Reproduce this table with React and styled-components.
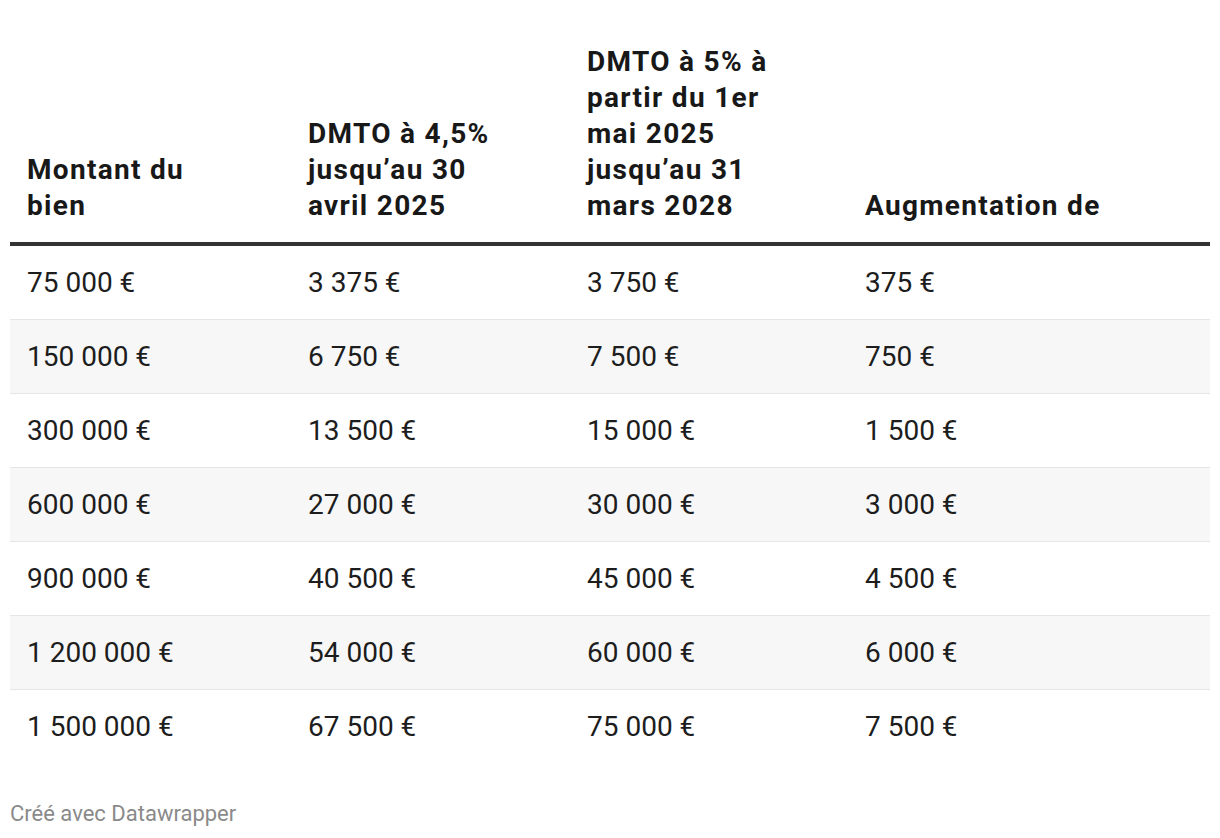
import React from 'react';
import styled, { createGlobalStyle } from 'styled-components';

const GlobalStyle = createGlobalStyle`
  html, body {
    margin: 0;
    padding: 0;
    background: #fff;
  }
  body {
    font-family: Roboto, "Liberation Sans", sans-serif;
    color: #1d1d1d;
  }
`;

const Page = styled.div`
  padding: 26px 10px 0 10px;
`;

const Table = styled.div`
  display: grid;
  grid-template-columns: 281px 279px 278px 1fr;
  width: 1200px;
`;

const HeadCell = styled.div`
  display: flex;
  align-items: flex-end;
  padding: 18px 17px 18px 17px;
  border-bottom: 4px solid #333;
  font-size: 28px;
  font-weight: 700;
  line-height: 36px;
  letter-spacing: 1.3px;
  color: #181818;
`;

const HeadLabel = styled.span`
  display: block;
  max-width: ${p => (p.$wide ? 'none' : '205px')};
`;

const Cell = styled.div`
  padding: 18px 17px;
  font-size: 28px;
  line-height: 37px;
  background: ${p => (p.$alt ? '#f7f7f7' : '#fff')};
  border-bottom: ${p => (p.$last ? 'none' : '1px solid #e6e6e6')};
  white-space: nowrap;
`;

const Footer = styled.div`
  margin-top: 38px;
  font-size: 22px;
  color: #8a8a8a;
`;

const headers = [
  'Montant du bien',
  'DMTO à 4,5% jusqu’au 30 avril 2025',
  'DMTO à 5% à partir du 1er mai 2025 jusqu’au 31 mars 2028',
  'Augmentation de',
];

const rows = [
  ['75 000 €', '3 375 €', '3 750 €', '375 €'],
  ['150 000 €', '6 750 €', '7 500 €', '750 €'],
  ['300 000 €', '13 500 €', '15 000 €', '1 500 €'],
  ['600 000 €', '27 000 €', '30 000 €', '3 000 €'],
  ['900 000 €', '40 500 €', '45 000 €', '4 500 €'],
  ['1 200 000 €', '54 000 €', '60 000 €', '6 000 €'],
  ['1 500 000 €', '67 500 €', '75 000 €', '7 500 €'],
];

export default function App() {
  return (
    <>
      <GlobalStyle />
      <Page>
        <Table>
          {headers.map((h, i) => (
            <HeadCell key={h}>
              <HeadLabel $wide={i === headers.length - 1}>{h}</HeadLabel>
            </HeadCell>
          ))}
          {rows.map((row, i) =>
            row.map((v, j) => (
              <Cell key={`${i}-${j}`} $alt={i % 2 === 1} $last={i === rows.length - 1}>
                {v}
              </Cell>
            ))
          )}
        </Table>
        <Footer>Créé avec Datawrapper</Footer>
      </Page>
    </>
  );
}
